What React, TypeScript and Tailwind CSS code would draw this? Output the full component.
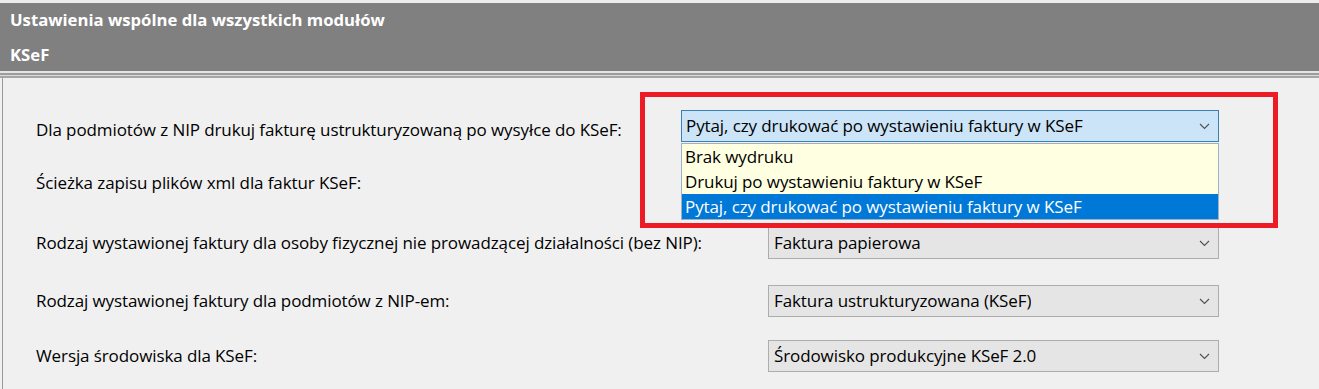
import React from 'react';

const Chevron: React.FC = () => (
  <svg width="11" height="7" viewBox="0 0 11 7" className="shrink-0">
    <polyline points="1,1 5.5,5.5 10,1" fill="none" stroke="#505050" strokeWidth="1.1" />
  </svg>
);

const Combo: React.FC<{ value: string; className?: string }> = ({ value, className }) => (
  <div
    className={`flex h-[32px] items-center justify-between border border-[#adadad] bg-[#e5e5e5] pl-[5px] pr-[8px] text-black ${className ?? ''}`}
  >
    <span className="truncate">{value}</span>
    <Chevron />
  </div>
);

const options = [
  'Brak wydruku',
  'Drukuj po wystawieniu faktury w KSeF',
  'Pytaj, czy drukować po wystawieniu faktury w KSeF',
];

const App: React.FC = () => {
  return (
    <div
      className="relative h-[389px] w-[1319px] overflow-hidden bg-[#f0f0f0] text-black"
      style={{ fontFamily: '"Open Sans", "Noto Sans", sans-serif' }}
    >
      {/* Header */}
      <div className="h-[3px] bg-[#ededed]" />
      <div className="h-[68px] bg-[#808080] text-[16.7px] font-bold text-white">
        <div className="flex h-[33px] items-center pl-[10px]">Ustawienia wspólne dla wszystkich modułów</div>
        <div className="flex h-[35px] items-center pl-[10px] pt-[3px]">KSeF</div>
      </div>
      <div className="h-[2px] bg-[#e4e4e4]" />
      <div className="h-[2px] bg-[#9c9c9c]" />
      <div className="h-[1px] bg-[#dadada]" />
      <div className="h-[2px] bg-[#a6a6a6]" />

      {/* Panel */}
      <div className="ml-[2px] h-[320px] border-l border-[#9a9a9a] text-[17px] tracking-[-0.1px]">
        <div className="flex flex-col pr-[100px] pl-[33px]">
          {/* Row 1 with open dropdown */}
          <div className="mt-[32px] flex h-[32px] items-center justify-between">
            <span className="pt-[7px]">Dla podmiotów z NIP drukuj fakturę ustrukturyzowaną po wysyłce do KSeF:</span>
            <div className="relative w-[538px]">
              <div className="flex h-[32px] items-center justify-between border border-[#3c7fb1] bg-[#cce4f7] pl-[4px] pr-[8px]">
                <span>Pytaj, czy drukować po wystawieniu faktury w KSeF</span>
                <Chevron />
              </div>
              <div className="absolute left-0 top-[33px] z-10 w-full border border-[#9fb2c4] bg-[#ffffe1]">
                {options.map((o, i) => (
                  <div
                    key={o}
                    className={`flex h-[25px] items-center pl-[3px] ${i === 2 ? 'bg-[#0078d7] text-white' : ''}`}
                  >
                    {o}
                  </div>
                ))}
              </div>
            </div>
          </div>

          <div className="mt-[25px] flex h-[32px] items-center">
            <span>Ścieżka zapisu plików xml dla faktur KSeF:</span>
          </div>

          <div className="mt-[28px] flex h-[32px] items-center justify-between">
            <span>Rodzaj wystawionej faktury dla osoby fizycznej nie prowadzącej działalności (bez NIP):</span>
            <Combo value="Faktura papierowa" className="w-[451px]" />
          </div>

          <div className="mt-[26px] flex h-[32px] items-center justify-between">
            <span>Rodzaj wystawionej faktury dla podmiotów z NIP-em:</span>
            <Combo value="Faktura ustrukturyzowana (KSeF)" className="w-[451px]" />
          </div>

          <div className="mt-[23px] flex h-[32px] items-center justify-between">
            <span>Wersja środowiska dla KSeF:</span>
            <Combo value="Środowisko produkcyjne KSeF 2.0" className="w-[451px]" />
          </div>
        </div>
      </div>

      {/* Red annotation frame */}
      <div className="pointer-events-none absolute left-[640px] top-[92px] z-20 h-[136px] w-[638px] border-[5px] border-[#ed1c24]" />
    </div>
  );
};

export default App;
